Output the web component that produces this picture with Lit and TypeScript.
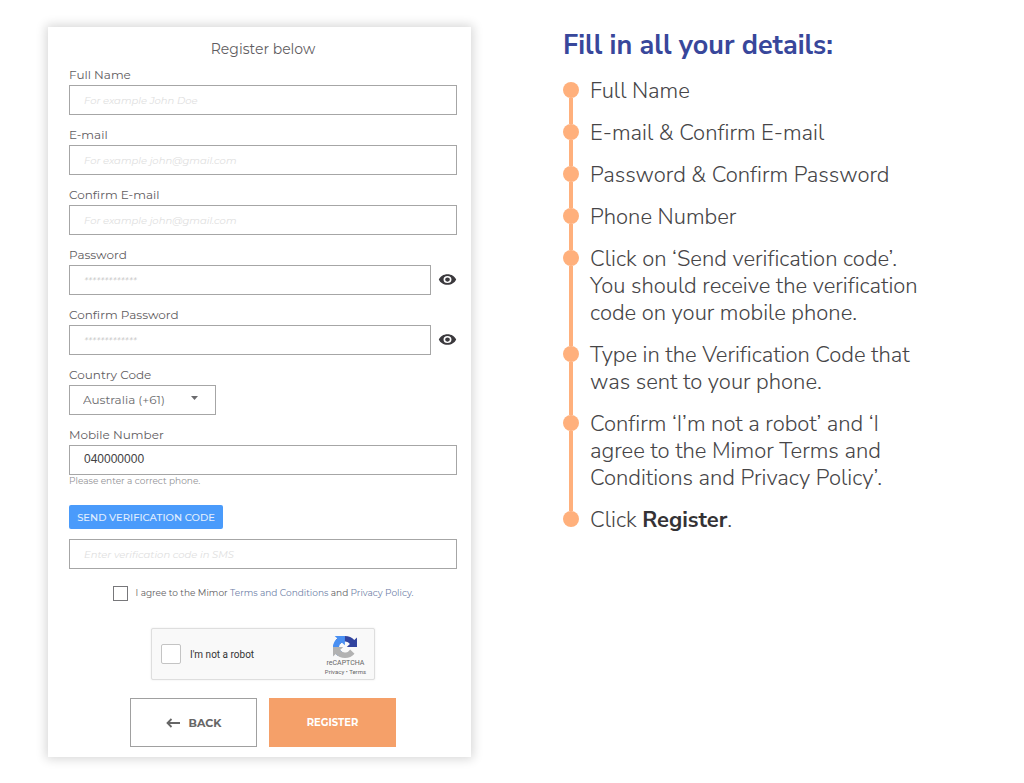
import { LitElement, html, css, svg } from "lit";
import { customElement, state } from "lit/decorators.js";

interface Field {
  id: string;
  label: string;
  type: string;
  placeholder: string;
}

const FIELDS: Field[] = [
  { id: "name", label: "Full Name", type: "text", placeholder: "For example John Doe" },
  { id: "email", label: "E-mail", type: "email", placeholder: "For example john@gmail.com" },
  { id: "email2", label: "Confirm E-mail", type: "email", placeholder: "For example john@gmail.com" },
  { id: "password", label: "Password", type: "password", placeholder: "*************" },
  { id: "password2", label: "Confirm Password", type: "password", placeholder: "*************" },
];

const STEPS = [
  html`Full Name`,
  html`E-mail &amp; Confirm E-mail`,
  html`Password &amp; Confirm Password`,
  html`Phone Number`,
  html`Click on ‘Send verification code’. You should receive the verification code on your mobile phone.`,
  html`Type in the Verification Code that was sent to your phone.`,
  html`Confirm ‘I’m not a robot’ and ‘I agree to the Mimor Terms and Conditions and Privacy Policy’.`,
  html`Click <strong>Register</strong>.`,
];

const eyeShape = svg`<path d="M12 4.500C7 4.500 2.700 7.600 1 12c1.700 4.400 6 7.500 11 7.500s9.300-3.100 11-7.500c-1.700-4.400-6-7.500-11-7.500zM12 17a5 5 0 1 1 0-10 5 5 0 0 1 0 10zm0-8a3 3 0 1 0 0 6 3 3 0 0 0 0-6z" fill="currentColor"/>`;

@customElement("register-form")
export class RegisterForm extends LitElement {
  @state() private shown: Record<string, boolean> = {};

  static styles = css`
    :host {
      display: block;
      font-family: Montserrat, Inter, sans-serif;
      color: #5f5d61;
      background: #fff;
      box-shadow: 0 0 10px 2px rgba(0, 0, 0, 0.16);
    }
    * {
      box-sizing: border-box;
    }
    .form {
      display: flex;
      flex-direction: column;
      padding: 12px 14px 10px 21px;
    }
    .title {
      margin: 0 0 8px;
      font-size: 14px;
      line-height: 20px;
      font-weight: 400;
      text-align: center;
    }
    .field {
      display: flex;
      flex-direction: column;
      gap: 2px;
      margin-bottom: 12px;
    }
    .label {
      font-size: 12px;
      line-height: 16px;
    }
    .row {
      display: flex;
      align-items: center;
      gap: 7px;
    }
    .input,
    .select {
      font: inherit;
      font-size: 12px;
      height: 30px;
      border: 1px solid #a6a6a6;
      border-radius: 0;
      background: #fff;
      color: #414042;
      padding: 0 14px 2px;
    }
    .input {
      flex: 1 1 auto;
      min-width: 0;
      width: 100%;
    }
    .input::placeholder {
      color: #dedede;
      font-size: 10px;
      font-style: italic;
      opacity: 1;
    }
    .input[type="password"]::placeholder {
      color: #c4c4c4;
    }
    .picker {
      display: grid;
      width: 147px;
      align-items: center;
    }
    .select {
      grid-area: 1 / 1;
      appearance: none;
      width: 100%;
      color: #6b6b6e;
      padding: 0 13px 2px;
    }
    .caret {
      grid-area: 1 / 1;
      justify-self: end;
      margin: 0 18px 4px 0;
      pointer-events: none;
      color: #6b6b6e;
    }
    .eye {
      display: flex;
      padding: 0 0 2px;
      border: 0;
      background: none;
      color: #3b393d;
    }
    .phone {
      margin-bottom: 18px;
      gap: 0;
    }
    .phone .input {
      margin-top: 2px;
      font-family: "Liberation Sans", Arial, sans-serif;
    }
    .hint {
      margin: 0;
      font-size: 9px;
      line-height: 12px;
      color: #929295;
    }
    .send {
      align-self: flex-start;
      width: 154px;
      height: 24px;
      margin-bottom: 10px;
      padding: 0;
      border: 0;
      border-radius: 2px;
      background: #4a9bfb;
      color: #e2effe;
      font: inherit;
      font-size: 10px;
      font-weight: 500;
    }
    .agree {
      display: flex;
      justify-content: center;
      align-items: center;
      gap: 8px;
      margin: 16px 0 27px;
      font-size: 9px;
      line-height: 16px;
    }
    .tick {
      appearance: none;
      width: 15px;
      height: 15px;
      margin: 0;
      border: 1px solid #77777a;
      background: #fff;
    }
    .link {
      color: #6f7fa8;
      text-decoration: none;
    }
    .captcha {
      display: flex;
      align-self: center;
      align-items: center;
      justify-content: space-between;
      width: 224px;
      height: 52px;
      margin-bottom: 18px;
      padding: 0 8px 0 9px;
      border: 1px solid #dedede;
      border-radius: 2px;
      background: #f9f9f9;
      box-shadow: 0 0 2px rgba(0, 0, 0, 0.1);
      font-family: Roboto, sans-serif;
    }
    .robot {
      display: flex;
      align-items: center;
      gap: 9px;
      font-size: 10px;
      color: #333;
    }
    .robot .tick {
      width: 20px;
      height: 20px;
      border-color: #c4c4c4;
      border-radius: 2px;
    }
    .brand {
      display: flex;
      flex-direction: column;
      align-items: center;
      padding-top: 4px;
      color: #666;
      font-size: 7px;
      line-height: 10px;
    }
    .small {
      font-size: 6px;
      line-height: 8px;
    }
    .small a {
      color: inherit;
      text-decoration: none;
    }
    .actions {
      display: flex;
      justify-content: center;
      gap: 12px;
    }
    .action {
      display: flex;
      align-items: center;
      justify-content: center;
      gap: 9px;
      width: 127px;
      height: 49px;
      padding: 0;
      border: 1px solid #a0a0a0;
      background: #fff;
      color: #666;
      font: inherit;
      font-size: 11px;
      font-weight: 700;
    }
    .primary {
      border-color: #f5a069;
      background: #f5a069;
      color: #fff;
      font-size: 10px;
    }
  `;

  private toggle(id: string) {
    this.shown = { ...this.shown, [id]: !this.shown[id] };
  }

  private renderField(f: Field) {
    const secret = f.type === "password";
    return html`
      <div class="field">
        <label class="label" for=${f.id}>${f.label}</label>
        <div class="row">
          <input
            class="input"
            id=${f.id}
            type=${secret && this.shown[f.id] ? "text" : f.type}
            placeholder=${f.placeholder}
          />
          ${secret
            ? html`<button class="eye" type="button" aria-label="Show password" @click=${() => this.toggle(f.id)}>
                <svg width="19" height="17" viewBox="0 0 24 24" preserveAspectRatio="none">${eyeShape}</svg>
              </button>`
            : null}
        </div>
      </div>
    `;
  }

  render() {
    return html`
      <form class="form" @submit=${(e: Event) => e.preventDefault()}>
        <h1 class="title">Register below</h1>
        ${FIELDS.map((f) => this.renderField(f))}
        <div class="field">
          <label class="label" for="country">Country Code</label>
          <div class="picker">
            <select class="select" id="country">
              <option>Australia (+61)</option>
            </select>
            <svg class="caret" width="7" height="4" viewBox="0 0 7 4"><path d="M0 0h7L3.500 4z" fill="currentColor" /></svg>
          </div>
        </div>
        <div class="field phone">
          <label class="label" for="mobile">Mobile Number</label>
          <input class="input" id="mobile" type="tel" .value=${"040000000"} aria-describedby="hint" />
          <p class="hint" id="hint">Please enter a correct phone.</p>
        </div>
        <button class="send" type="button">SEND VERIFICATION CODE</button>
        <input class="input" type="text" aria-label="Verification code" placeholder="Enter verification code in SMS" />
        <div class="agree">
          <input class="tick" type="checkbox" id="agree" />
          <label for="agree"
            >I agree to the Mimor <a class="link" href="#terms">Terms and Conditions</a> and
            <a class="link" href="#privacy">Privacy Policy.</a></label
          >
        </div>
        <div class="captcha">
          <label class="robot"><input class="tick" type="checkbox" />I'm not a robot</label>
          <div class="brand">
            <svg width="24" height="22" viewBox="0 0 64 64" preserveAspectRatio="none">
              <path d="M64 31.955a33 33 0 0 0-.04-1.373V4.640l-7.170 7.170A31.950 31.950 0 0 0 32.050 0C21.710 0 12.520 4.910 6.680 12.520l11.750 11.880a15.600 15.600 0 0 1 4.760-5.340c2.050-1.600 4.960-2.910 8.860-2.910.47 0 .83.050 1.100.16a15.600 15.600 0 0 1 11.940 7.180l-8.320 8.320z" fill="#31449f" />
              <path d="M31.860 0a33 33 0 0 0-1.370.04H4.550l7.170 7.170A31.950 31.950 0 0 0 0 31.950c0 10.350 4.910 19.530 12.520 25.380l11.790-11.750a15.600 15.600 0 0 1-5.340-4.760c-1.600-2.050-2.910-4.960-2.910-8.860 0-.47.050-.83.160-1.100a15.600 15.600 0 0 1 7.180-11.940l8.320 8.320z" fill="#4a90f2" />
              <path d="M0 32.050c.01.460.02.920.04 1.370v25.940l7.170-7.170A31.950 31.950 0 0 0 31.950 64c10.350 0 19.530-4.910 25.380-12.520L45.580 39.600a15.600 15.600 0 0 1-4.760 5.340c-2.050 1.600-4.960 2.910-8.860 2.910-.47 0-.83-.050-1.100-.16a15.600 15.600 0 0 1-11.940-7.180l8.320-8.320z" fill="#b2b2b2" />
            </svg>
            <span>reCAPTCHA</span>
            <span class="small"><a href="#rc-privacy">Privacy</a> • <a href="#rc-terms">Terms</a></span>
          </div>
        </div>
        <div class="actions">
          <button class="action" type="button">
            <svg width="14" height="10" viewBox="0 0 14 10" fill="none" stroke="currentColor" stroke-width="1.800"><path d="M14 5H1.500M5.500 1l-4 4 4 4" /></svg>
            BACK
          </button>
          <button class="action primary" type="submit">REGISTER</button>
        </div>
      </form>
    `;
  }
}

@customElement("step-list")
export class StepList extends LitElement {
  static styles = css`
    :host {
      display: block;
      font-family: Avenir, "Nunito Sans", Lato, sans-serif;
      font-variant-ligatures: none;
      color: #464547;
    }
    .heading {
      margin: 0 0 13px;
      color: #38479b;
      font-size: 27px;
      line-height: 38px;
      font-weight: 700;
    }
    .steps {
      margin: 0;
      padding: 0;
      list-style: none;
    }
    .step {
      display: flex;
      gap: 11px;
    }
    .marker {
      display: flex;
      flex: none;
      flex-direction: column;
      align-items: center;
      width: 16px;
      padding-top: 4px;
      margin-bottom: -4px;
    }
    .dot {
      width: 16px;
      height: 16px;
      border-radius: 50%;
      background: #ffb07c;
    }
    .rail {
      flex: 1;
      width: 4px;
      background: #ffb07c;
    }
    .step:last-child .rail {
      display: none;
    }
    .text {
      margin: 0 0 15px;
      font-size: 22px;
      line-height: 27px;
      font-weight: 300;
    }
    strong {
      font-weight: 700;
      color: #343235;
    }
  `;

  render() {
    return html`
      <h2 class="heading">Fill in all your details:</h2>
      <ol class="steps">
        ${STEPS.map(
          (text) => html`<li class="step">
            <span class="marker"><span class="dot"></span><span class="rail"></span></span>
            <p class="text">${text}</p>
          </li>`
        )}
      </ol>
    `;
  }
}

@customElement("app-root")
export class AppRoot extends LitElement {
  static styles = css`
    :host {
      display: block;
      background: #fff;
    }
    .page {
      display: grid;
      grid-template-columns: minmax(0, 423fr) minmax(0, 364fr);
      column-gap: 92px;
      align-items: start;
      padding: 27px 97px 26px 48px;
    }
  `;

  render() {
    return html`
      <main class="page">
        <register-form></register-form>
        <step-list></step-list>
      </main>
    `;
  }
}
